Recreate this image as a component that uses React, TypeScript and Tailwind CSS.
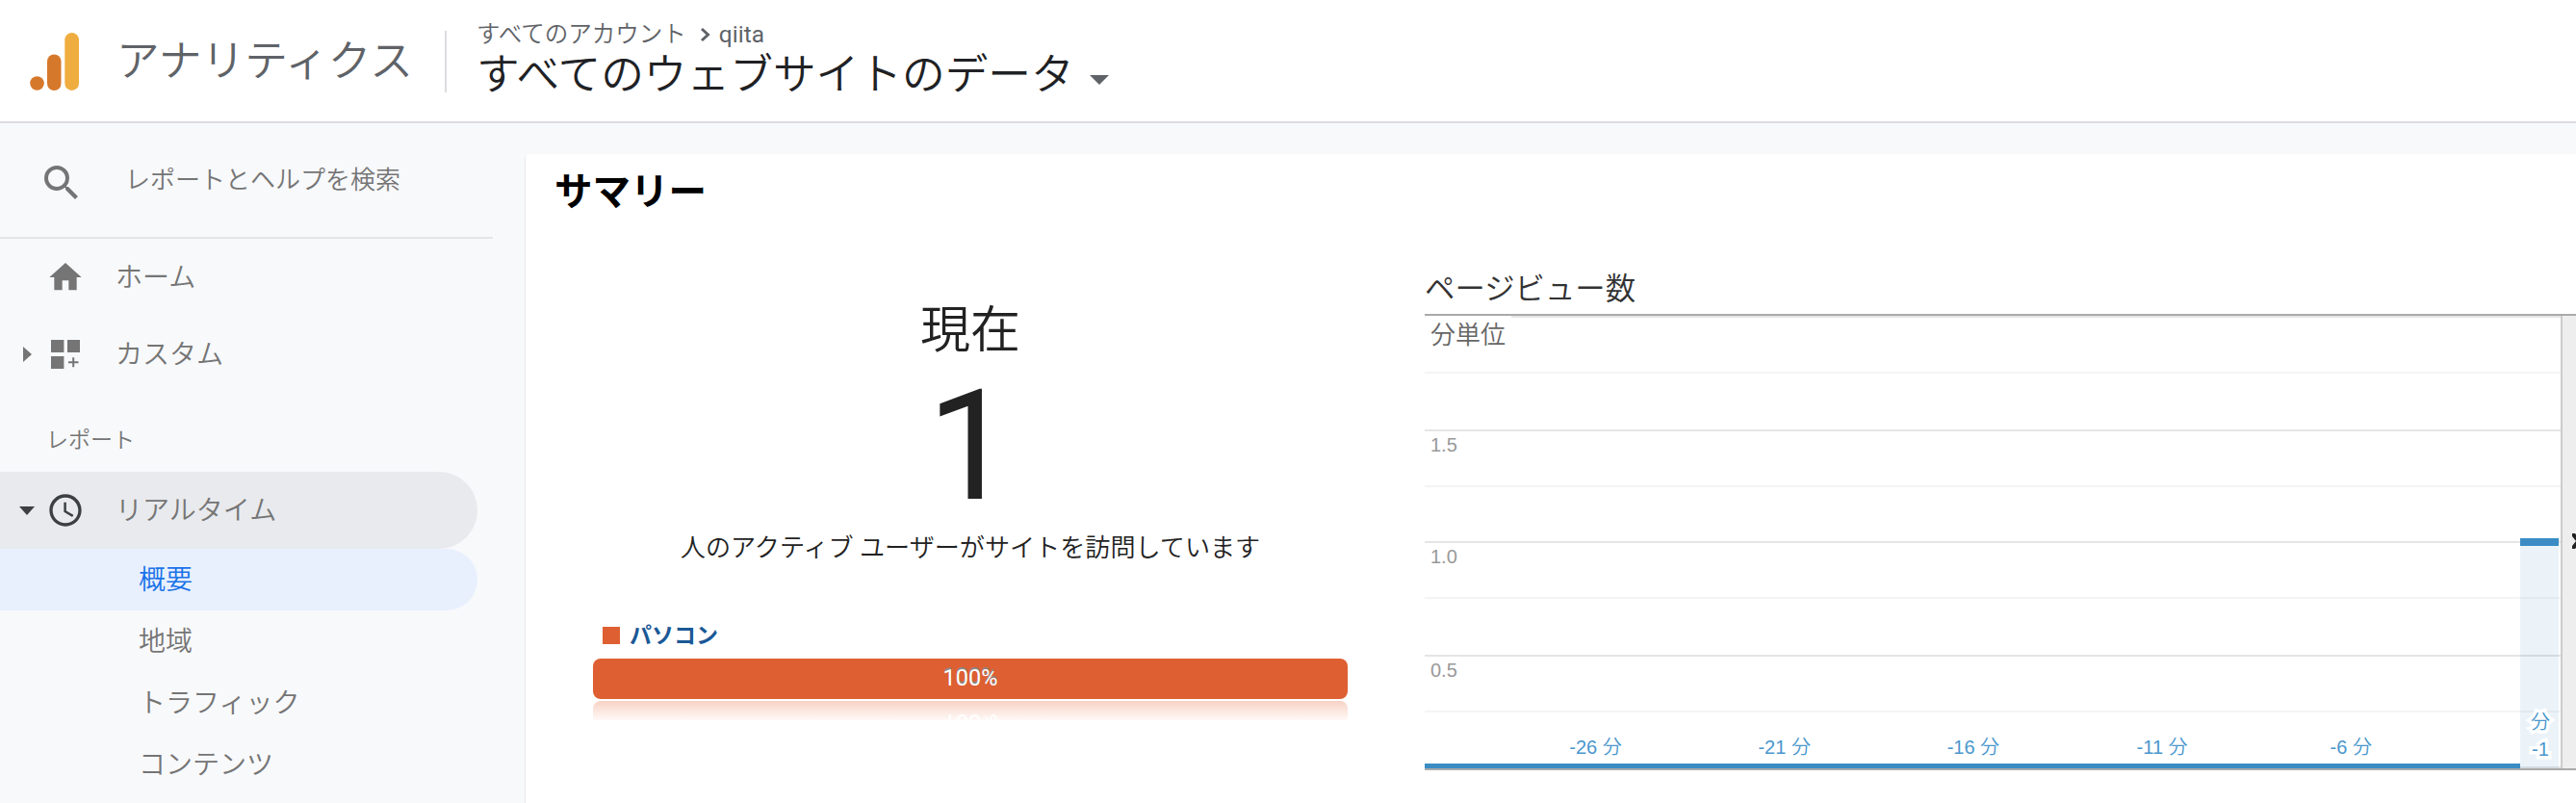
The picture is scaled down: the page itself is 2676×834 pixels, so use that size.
import React from "react";
import type { ReactNode } from "react";

const NAV_CHILDREN = ["概要", "地域", "トラフィック", "コンテンツ"];

// alternating minor/major rules, top offset inside the plot area
const GRID_LINES = [
    { top: 0, major: true },
    { top: 58, major: false },
    { top: 118, major: true, label: "1.5" },
    { top: 176, major: false },
    { top: 234, major: true, label: "1.0" },
    { top: 292, major: false },
    { top: 352, major: true, label: "0.5" },
    { top: 410, major: false },
    { top: 468, major: true },
];

const MINUTES = [-26, -21, -16, -11, -6];

function AnalyticsLogo() {
    return (
        <svg className="w-[52px] h-[60px]" viewBox="0 0 52 60">
            <circle cx="7.5" cy="52.5" r="7.3" fill="#d6782b" />
            <rect x="18" y="22.5" width="14.5" height="37.5" rx="7.25" fill="#d6782b" />
            <rect x="36.3" y="0" width="14.7" height="60" rx="7.35" fill="#efad3f" />
        </svg>
    );
}

function Header() {
    return (
        <header className="flex h-32 border-b-2 border-[#dcdce1] bg-white">
            <div className="pl-[31px] pt-[34px]">
                <AnalyticsLogo />
            </div>
            <div className="ml-[38px] mt-8 w-[341px] text-[44.7px] leading-[64px] font-[350] text-[#5f6368]">
                アナリティクス
            </div>
            <div className="mt-8 h-16 w-0.5 bg-[#dadce0]" />
            <div className="ml-[31px] pt-[18px]">
                <div className="flex h-9 items-center text-[24.5px] leading-9 text-[#5f6368]">
                    <span className="font-[350]">すべてのアカウント</span>
                    <svg className="ml-[14px] w-3 h-4" viewBox="0 0 12 16">
                        <path d="M2 2l6.5 6L2 14" fill="none" stroke="#5f6368" strokeWidth="3" />
                    </svg>
                    <span className="ml-2">qiita</span>
                </div>
                <div className="flex items-center text-[44.7px] leading-[49px] font-[350] text-[#202124]">
                    <span>すべてのウェブサイトのデータ</span>
                    <svg className="ml-[16px] mt-2 w-5 h-[10px]" viewBox="0 0 20 10">
                        <path d="M0 0h20L10 10z" fill="#5f6368" />
                    </svg>
                </div>
            </div>
        </header>
    );
}

interface NavRowProps {
    arrow?: ReactNode;
    icon: ReactNode;
    label: string;
    active?: boolean;
}

function NavRow({ arrow, icon, label, active }: NavRowProps) {
    return (
        <div
            className={`flex h-20 w-[496px] items-center text-[28px] ${
                active ? "rounded-r-full bg-[#e8eaed]" : ""
            }`}
        >
            <div className="flex w-12 justify-center pl-2">{arrow}</div>
            <div className="w-[72px]">{icon}</div>
            <span className="pt-0.5">{label}</span>
        </div>
    );
}

function Sidebar() {
    return (
        <nav className="w-[546px] shrink-0 font-[350] text-[#757575]">
            <div className="flex h-[120px] w-[512px] items-center border-b-2 border-[#e4e5e7]">
                <svg className="ml-[40px] mt-1.5 w-12 h-12" viewBox="0 0 24 24" fill="#757575">
                    <path d="M15.5 14h-.79l-.28-.27A6.47 6.47 0 0 0 16 9.5 6.5 6.5 0 1 0 9.5 16c1.61 0 3.09-.59 4.23-1.57l.27.28v.79l5 4.99L20.49 19l-4.99-5zm-6 0C7.01 14 5 11.99 5 9.5S7.01 5 9.5 5 14 7.01 14 9.5 11.99 14 9.5 14z" />
                </svg>
                <span className="ml-[42px] text-[26px]">レポートとヘルプを検索</span>
            </div>
            <NavRow
                icon={
                    <svg className="w-10 h-10" viewBox="0 0 24 24" fill="#757575">
                        <path d="M10 20v-6h4v6h5v-8h3L12 3 2 12h3v8z" />
                    </svg>
                }
                label="ホーム"
            />
            <NavRow
                arrow={
                    <svg className="w-[9px] h-4" viewBox="0 0 9 16">
                        <path d="M0 0l9 8-9 8z" fill="#757575" />
                    </svg>
                }
                icon={
                    <svg className="w-10 h-10" viewBox="0 0 40 40" fill="#757575">
                        <path d="M5 5h13.4v13H5zM22 5h13v13H22zM5 22h13.4v13H5z" />
                        <path d="M27.2 23.2h2v4h4.3v2h-4.3v4h-2v-4H23v-2h4.2z" />
                    </svg>
                }
                label="カスタム"
            />
            <div className="h-[82px] pl-12 pt-8 text-[23px] leading-9">レポート</div>
            <NavRow
                active
                arrow={
                    <svg className="w-4 h-[9px]" viewBox="0 0 16 9">
                        <path d="M0 0h16L8 9z" fill="#3c4043" />
                    </svg>
                }
                icon={
                    <svg className="w-10 h-10" viewBox="0 0 24 24" fill="#3c4043">
                        <path d="M11.99 2C6.47 2 2 6.48 2 12s4.47 10 9.99 10C17.52 22 22 17.52 22 12S17.52 2 11.99 2zM12 20c-4.42 0-8-3.58-8-8s3.58-8 8-8 8 3.58 8 8-3.58 8-8 8z" />
                        <path d="M12.5 7H11v6l5.25 3.15.75-1.23-4.5-2.67z" />
                    </svg>
                }
                label="リアルタイム"
            />
            {NAV_CHILDREN.map((label, i) => (
                <div
                    key={label}
                    className={`flex h-16 w-[496px] items-center pl-36 pt-0.5 text-[28px] ${
                        i === 0 ? "rounded-r-full bg-[#e8f0fe] text-[#1a73e8]" : ""
                    }`}
                >
                    {label}
                </div>
            ))}
        </nav>
    );
}

function ActiveUsers() {
    return (
        <div className="flex w-[784px] flex-col text-[#222]">
            <div className="mt-[74px] text-center text-[52px] leading-[64px] font-[350]">現在</div>
            <div className="mt-[8px] text-center text-[160px] leading-[160px]">1</div>
            <div className="mt-[5px] text-center text-[26.1px] leading-10 font-[350]">
                人のアクティブ ユーザーがサイトを訪問しています
            </div>
            <div className="mt-[51px] flex items-center pl-[10px] text-[23px] leading-[38px] font-bold text-[#1a5896]">
                <span className="mr-[10px] h-[18px] w-[18px] bg-[#de5f32]" />
                <span className="pt-0.5">パソコン</span>
            </div>
            <div className="mt-[4px] h-[42px] rounded-lg bg-[#de5f32] text-center text-[23.5px] leading-[40px] text-white [text-shadow:0_-2px_0_#888]">
                100%
            </div>
            {/* mirrored fade under the bar */}
            <div className="mt-0.5 h-5 overflow-hidden rounded-t-lg bg-linear-to-b from-[#f6d2c5] to-[#fffaf8]">
                <div className="h-[42px] -scale-y-100 text-center text-[23.5px] leading-[40px] text-white">
                    100%
                </div>
            </div>
        </div>
    );
}

function PageviewChart() {
    return (
        <div className="ml-20 w-[1196px]">
            <div className="mt-[41px] text-[31.4px] leading-[44px] font-[350] text-[#333]">ページビュー数</div>
            <div className="mt-[3px] flex h-[474px] border-y-2 border-[#aaa] font-['Liberation_Sans','Noto_Sans_CJK_JP',sans-serif]">
                <div className="relative w-[1180px]">
                    {GRID_LINES.map(({ top, major, label }) => (
                        <div
                            key={top}
                            className={`absolute left-0 h-0.5 w-full ${major ? "bg-[#e5e5e5]" : "bg-[#f4f4f4]"}`}
                            style={{ top }}
                        >
                            {label && (
                                <span className="absolute left-[6px] top-[5px] text-[20px] leading-[23px] text-[#999]">
                                    {label}
                                </span>
                            )}
                        </div>
                    ))}
                    <div className="absolute left-0 top-0 h-9 w-[90px] bg-white pl-[6px] text-[26px] leading-10 font-[350] text-[#666]">
                        分単位
                    </div>
                    {MINUTES.map((minute, i) => (
                        <div
                            key={minute}
                            className="absolute top-[436px] w-[120px] text-center text-[20px] leading-[24px] font-[350] text-[#4a97cd]"
                            style={{ left: 117.5 + i * 196.2 }}
                        >
                            {minute} 分
                        </div>
                    ))}
                    <div className="absolute bottom-0 left-0 h-[5px] w-[1138px] bg-[#3b8cc4]" />
                    <div className="absolute bottom-0 left-[1138px] h-[239px] w-10 border-t-[8px] border-[#3b8cc4] bg-[#3b8cc4]/10 bg-clip-padding" />
                    <div className="absolute left-[1139px] top-[408px] w-10 text-center text-[20px] leading-[28px] font-[350] text-[#4a97cd] [-webkit-text-stroke:7px_white] [paint-order:stroke_fill]">
                        分<br />-1
                    </div>
                </div>
                <div className="relative w-4 overflow-hidden border-l-2 border-[#ccc] bg-[#eee]">
                    <svg className="absolute left-[10px] top-[226px] w-4 h-4" viewBox="0 0 16 16">
                        <path d="M0 0h3l6 8-6 8H0v-3l4-5-4-5z" fill="#222" />
                    </svg>
                </div>
            </div>
        </div>
    );
}

export default function App() {
    return (
        <div className="h-[834px] w-[2676px] overflow-hidden bg-[#f8f9fb] font-[Roboto,'Noto_Sans_CJK_JP',sans-serif]">
            <Header />
            <div className="flex">
                <Sidebar />
                <main className="mt-8 h-[674px] flex-1 rounded-tl bg-white shadow-[-1px_1px_1px_rgba(0,0,0,0.07)]">
                    <h1 className="h-[78px] pl-[30px] pt-[11px] text-[39.5px] leading-[58px] font-bold text-black">
                        サマリー
                    </h1>
                    <div className="flex pl-[70px]">
                        <ActiveUsers />
                        <PageviewChart />
                    </div>
                </main>
            </div>
        </div>
    );
}
